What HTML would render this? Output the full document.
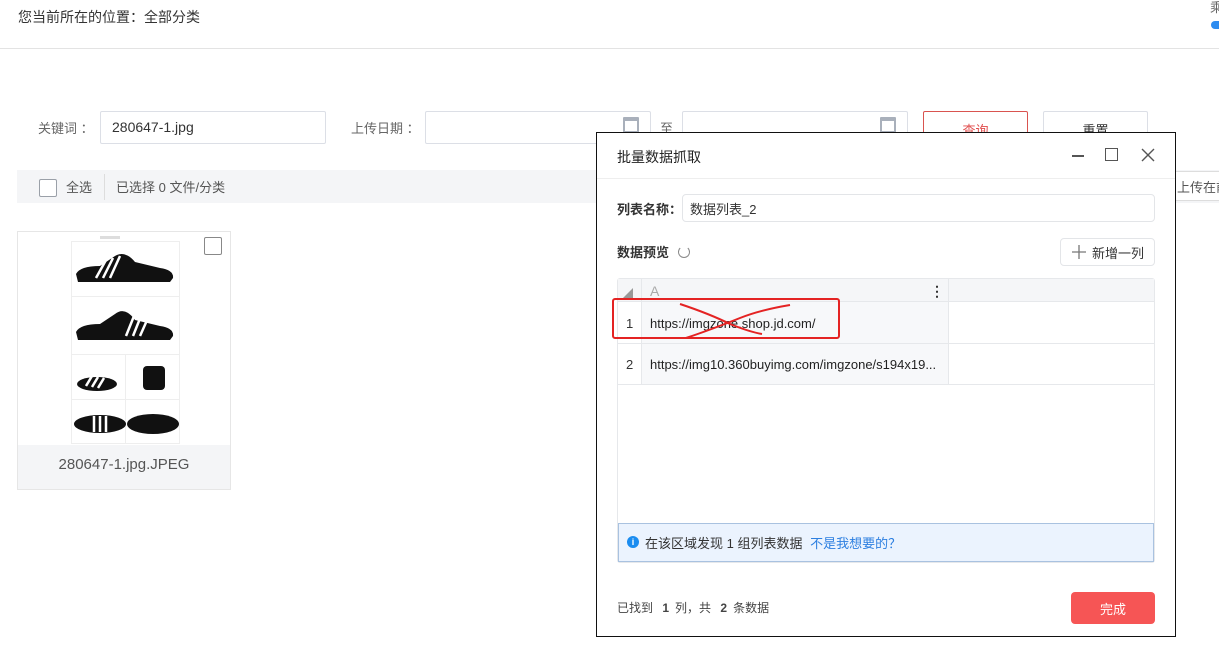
<!DOCTYPE html>
<html><head><meta charset="utf-8"><style>
*{box-sizing:border-box;margin:0;padding:0}
body{width:1219px;height:659px;overflow:hidden;background:#fff;font-family:"Liberation Sans","Noto Sans CJK SC",sans-serif;color:#333;position:relative}
.a{position:absolute}
.inp{position:absolute;border:1px solid #dcdfe6;border-radius:2px;background:#fff}
.t13{font-size:13px}
.cb{position:absolute;width:18px;height:18px;border:1px solid #9aa0a8;border-radius:2px;background:#fff}
.cal{position:absolute;width:16px;height:16px;border:2px solid #a9b0bb;border-top-width:4px;border-radius:1px}
</style></head><body>
<div class="a" style="left:18px;top:7px;font-size:14px;color:#333">您当前所在的位置：全部分类</div>
<div class="a" style="left:1210px;top:-3px;font-size:13px;color:#666">乘</div>
<div class="a" style="left:1211px;top:21px;width:12px;height:8px;border-radius:4px;background:#2d8cf0"></div>
<div class="a" style="left:0;top:48px;width:1219px;height:1px;background:#e3e3e3"></div>

<div class="a t13" style="left:38px;top:118px;color:#666">关键词 ：</div>
<div class="inp" style="left:100px;top:111px;width:226px;height:33px"></div>
<div class="a" style="left:112px;top:119px;font-size:14px;color:#333">280647-1.jpg</div>
<div class="a t13" style="left:351px;top:118px;color:#666">上传日期 ：</div>
<div class="inp" style="left:425px;top:111px;width:226px;height:33px"></div>
<div class="cal" style="left:623px;top:117px"></div>
<div class="a t13" style="left:660px;top:118px;color:#666">至</div>
<div class="inp" style="left:682px;top:111px;width:226px;height:33px"></div>
<div class="cal" style="left:880px;top:117px"></div>
<div class="a" style="left:923px;top:111px;width:105px;height:33px;border:1px solid #d9534f;border-radius:2px;color:#e04b4b;font-size:13px;text-align:center;padding-top:8px">查询</div>
<div class="a" style="left:1043px;top:111px;width:105px;height:33px;border:1px solid #dcdfe6;border-radius:2px;font-size:13px;text-align:center;padding-top:8px">重置</div>

<div class="a" style="left:17px;top:170px;width:1202px;height:33px;background:#f4f5f7"></div>
<div class="cb" style="left:39px;top:179px"></div>
<div class="a t13" style="left:66px;top:177px;color:#555">全选</div>
<div class="a" style="left:104px;top:174px;width:1px;height:26px;background:#ddd"></div>
<div class="a t13" style="left:116px;top:177px;color:#555">已选择 0 文件/分类</div>
<div class="a" style="left:1172px;top:171px;width:60px;height:30px;border:1px solid #ddd;background:#fff;font-size:13px;padding:5px 0 0 4px;color:#555">上传在前</div>

<div class="a" style="left:17px;top:231px;width:214px;height:259px;border:1px solid #e6e6e6;background:#fff"></div>
<div class="a" style="left:18px;top:445px;width:212px;height:44px;background:#f4f5f7;text-align:center;font-size:15px;color:#555;padding-top:11px">280647-1.jpg.JPEG</div>
<div class="cb" style="left:204px;top:237px;border-color:#888"></div>
<svg class="a" style="left:70px;top:236px" width="112" height="208">
<rect x="30" y="0" width="20" height="3" fill="#ddd"/>
<g fill="none" stroke="#eee"><rect x="1.5" y="5.5" width="108" height="55"/><rect x="1.5" y="60.5" width="108" height="58"/><rect x="1.5" y="118.5" width="54" height="45"/><rect x="55.5" y="118.5" width="54" height="45"/><rect x="1.5" y="163.5" width="54" height="44"/><rect x="55.5" y="163.5" width="54" height="44"/></g>
<g fill="#111">
<path d="M6 38 Q10 30 30 30 L45 20 Q55 14 65 26 L90 32 Q104 34 103 42 L100 46 L8 46 Z"/>
<path d="M6 96 Q10 88 30 88 L45 78 Q55 70 65 84 L90 90 Q104 92 103 100 L100 104 L8 104 Z"/>
<ellipse cx="27" cy="148" rx="20" ry="7"/>
<rect x="73" y="130" width="22" height="24" rx="4"/>
<ellipse cx="30" cy="188" rx="26" ry="9"/>
<ellipse cx="83" cy="188" rx="26" ry="10"/>
</g>
<g stroke="#fff" stroke-width="2.5">
<path d="M26 42 L36 24 M33 42 L43 22 M40 42 L50 20"/>
<path d="M56 100 L64 80 M63 100 L71 80 M70 100 L78 82"/>
<path d="M16 150 L22 140 M22 151 L28 141 M28 152 L34 142"/>
<path d="M24 196 L24 180 M30 196 L30 180 M36 196 L36 180"/>
</g>
</svg>

<!-- dialog -->
<div class="a" style="left:596px;top:132px;width:580px;height:505px;border:1.5px solid #111;background:#fff"></div>
<div class="a" style="left:617px;top:147px;font-size:14px;color:#222">批量数据抓取</div>
<div class="a" style="left:1072px;top:155px;width:12px;height:1.5px;background:#555"></div>
<div class="a" style="left:1105px;top:148px;width:13px;height:13px;border:1.5px solid #555"></div>
<svg class="a" style="left:1141px;top:148px" width="14" height="14"><path d="M1 1L13 13M13 1L1 13" stroke="#555" stroke-width="1.4"/></svg>
<div class="a" style="left:597px;top:178px;width:578px;height:1px;background:#eee"></div>

<div class="a" style="left:617px;top:199px;font-size:13px;font-weight:bold;color:#333">列表名称：</div>
<div class="inp" style="left:682px;top:194px;width:473px;height:28px;border-color:#e3e5e8;border-radius:4px"></div>
<div class="a" style="left:690px;top:199px;font-size:13px;color:#333">数据列表_2</div>
<div class="a" style="left:617px;top:242px;font-size:13px;font-weight:bold;color:#333">数据预览</div>
<div class="a" style="left:678px;top:246px;width:12px;height:12px;border:1.3px solid #888;border-top-color:transparent;border-radius:50%"></div>
<div class="a" style="left:1060px;top:238px;width:95px;height:28px;border:1px solid #e3e5e8;border-radius:4px;font-size:13px;padding:4px 0 0 31px;color:#333">新增一列</div>
<svg class="a" style="left:1072px;top:245px" width="14" height="14"><path d="M7 0V14M0 7H14" stroke="#777" stroke-width="1.3"/></svg>

<div class="a" style="left:617px;top:278px;width:538px;height:285px;border:1px solid #e6e8eb;border-radius:3px"></div>
<div class="a" style="left:618px;top:279px;width:536px;height:23px;background:#f5f6f8;border-bottom:1px solid #e6e8eb"></div>
<div class="a" style="left:641px;top:302px;width:307px;height:82px;background:#f7f8fa"></div>
<div class="a" style="left:618px;top:343px;width:536px;height:1px;background:#e6e8eb"></div>
<div class="a" style="left:618px;top:384px;width:536px;height:1px;background:#e6e8eb"></div>
<div class="a" style="left:641px;top:279px;width:1px;height:105px;background:#e6e8eb"></div>
<div class="a" style="left:948px;top:279px;width:1px;height:105px;background:#e6e8eb"></div>
<svg class="a" style="left:623px;top:286px" width="10" height="12"><path d="M10 2L10 12L0 12Z" fill="#999"/></svg>
<div class="a" style="left:650px;top:283px;font-size:14px;color:#aaa">A</div>
<div class="a" style="left:930px;top:283px;font-size:14px;color:#333;font-weight:bold">⋮</div>
<div class="a t13" style="left:626px;top:316px">1</div>
<div class="a t13" style="left:650px;top:316px;color:#222">https://imgzone.shop.jd.com/</div>
<div class="a t13" style="left:626px;top:357px">2</div>
<div class="a t13" style="left:650px;top:357px;color:#222">https://img10.360buyimg.com/imgzone/s194x19...</div>
<div class="a" style="left:612px;top:298px;width:228px;height:41px;border:2px solid #e42323;border-radius:3px"></div>
<svg class="a" style="left:670px;top:300px" width="130" height="40"><path d="M10 4 Q40 14 60 24 Q80 32 92 34" stroke="#e42323" stroke-width="2" fill="none"/><path d="M120 5 Q90 10 70 18 Q40 30 16 38" stroke="#e42323" stroke-width="2" fill="none"/></svg>

<div class="a" style="left:618px;top:523px;width:536px;height:39px;background:#ebf3fe;border:1px solid #a9c2e0"></div>
<div class="a" style="left:627px;top:536px;width:12px;height:12px;border-radius:50%;background:#1a8cf0;color:#fff;font-size:9px;text-align:center;line-height:12px;font-weight:bold">i</div>
<div class="a t13" style="left:645px;top:533px;color:#333">在该区域发现 1 组列表数据 <span style="color:#2d7fe0;margin-left:4px">不是我想要的？</span></div>

<div class="a" style="left:617px;top:599px;font-size:12px;color:#444">已找到 <b style="margin:0 6px">1</b>列，共 <b style="margin:0 6px">2</b>条数据</div>
<div class="a" style="left:1071px;top:592px;width:84px;height:32px;border-radius:4px;background:#f65555;color:#fff;font-size:13px;text-align:center;padding-top:7px">完成</div>
</body></html>
